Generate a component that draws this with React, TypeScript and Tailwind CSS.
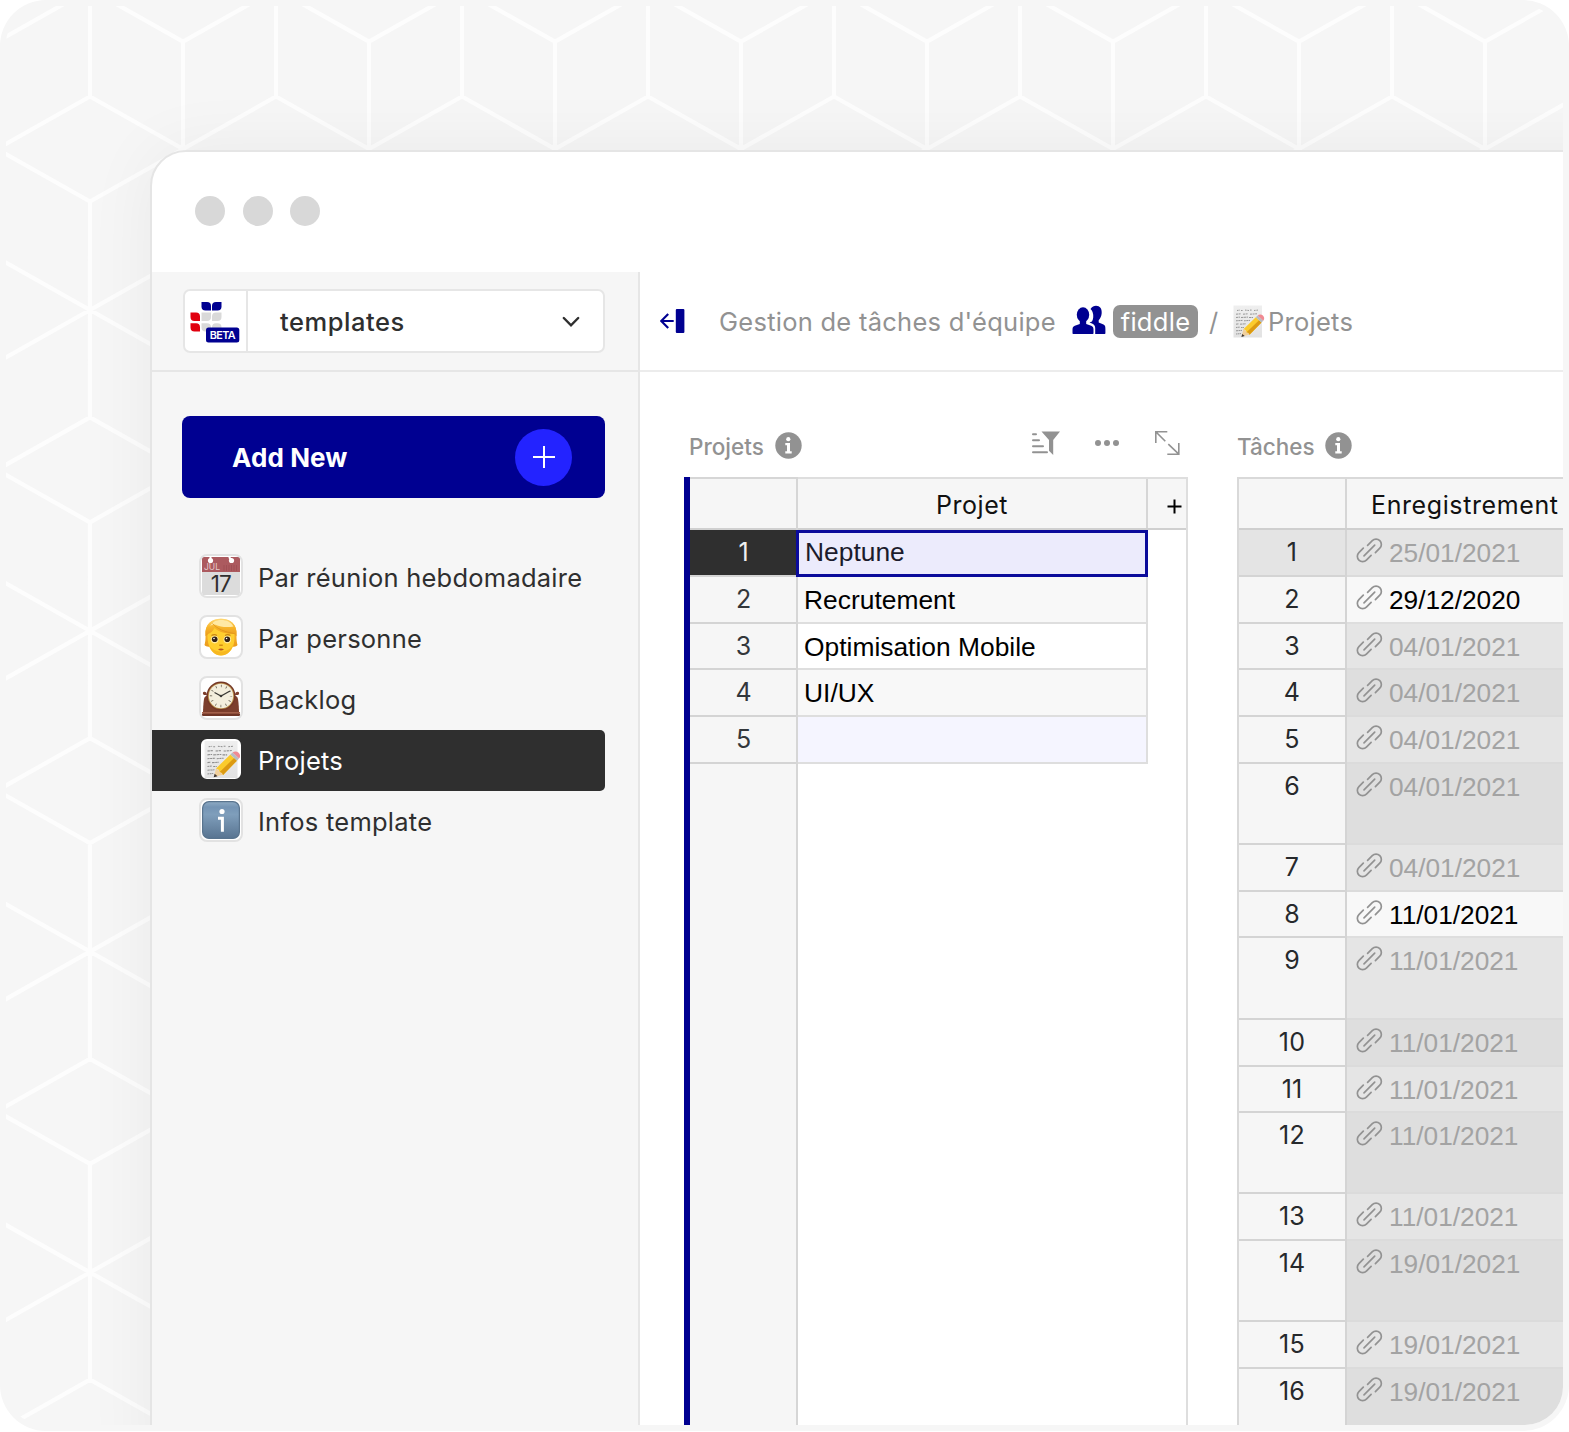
import React from 'react';

const menu = [
  { label: 'Par réunion hebdomadaire', icon: 'calendar' },
  { label: 'Par personne', icon: 'person' },
  { label: 'Backlog', icon: 'clock' },
  { label: 'Projets', icon: 'memo', active: true },
  { label: 'Infos template', icon: 'info' },
];

const projects = ['Neptune', 'Recrutement', 'Optimisation Mobile', 'UI/UX', ''];
const projectHeights = ['h-[47px]', 'h-[47px]', 'h-[46px]', 'h-[47px]', 'h-[47px]'];

const tasks = [
  { date: '25/01/2021', h: 'h-[47px]' },
  { date: '29/12/2020', h: 'h-[47px]', set: true },
  { date: '04/01/2021', h: 'h-[46px]' },
  { date: '04/01/2021', h: 'h-[47px]' },
  { date: '04/01/2021', h: 'h-[47px]' },
  { date: '04/01/2021', h: 'h-[81px]' },
  { date: '04/01/2021', h: 'h-[47px]' },
  { date: '11/01/2021', h: 'h-[46px]', set: true },
  { date: '11/01/2021', h: 'h-[82px]' },
  { date: '11/01/2021', h: 'h-[47px]' },
  { date: '11/01/2021', h: 'h-[46px]' },
  { date: '11/01/2021', h: 'h-[81px]' },
  { date: '11/01/2021', h: 'h-[47px]' },
  { date: '19/01/2021', h: 'h-[81px]' },
  { date: '19/01/2021', h: 'h-[47px]' },
  { date: '19/01/2021', h: 'h-[60px]' },
];

function CubePattern() {
  let d = '';
  for (let c = -1; c < 18; c++) {
    for (let r = -1; r < 6; r++) {
      const x = 84 + c * 93;
      const y = (c % 2 === 0 ? 304 : 143) + r * 320.8;
      d += `M${x} ${y - 109}V${y + 108}M${x - 93} ${y - 52.5}L${x + 93} ${y + 52.5}M${x - 93} ${y + 52.5}L${x + 93} ${y - 52.5}`;
    }
  }
  return (
    <svg className="absolute left-0 top-0" width="1557" height="1413" fill="none">
      <path d={d} stroke="#fdfdfd" strokeWidth="4.2" />
    </svg>
  );
}

function Memo({ className }: { className?: string }) {
  return (
    <svg viewBox="0 0 32 33" className={className}>
      <defs>
        <linearGradient id="paper" x1="0" y1="0" x2="0" y2="1">
          <stop offset="0" stopColor="#efefef" />
          <stop offset="1" stopColor="#e2e2e2" />
        </linearGradient>
      </defs>
      <rect x="0.5" y="0.5" width="28.5" height="32" fill="url(#paper)" />
      <g stroke="#777" strokeWidth="0.9" opacity=".8" fill="none">
        <path d="M4 5.5l3-.4m1 .4h2m2-.4l4 .4m1-.4h2m2 .4l4-.4" strokeDasharray="1.6 .8" />
        <path d="M3 9.200l5-.4m2 .4l5-.4m2 .4l7-.4" strokeDasharray="2 .6" />
        <path d="M3 12.500l4-.4m1 .4l7-.4m1 .4h4" strokeDasharray="2.400 .5" />
        <path d="M3 15.800l7-.4m1 .4l6-.4" strokeDasharray="1.800 .5" />
        <path d="M3 19.200l3-.4m1 .4l6-.4" strokeDasharray="2.200 .5" />
        <path d="M3 22.500l4-.4m1 .4h3" strokeDasharray="1.600 .5" />
        <path d="M3 25.800l6-.4" strokeDasharray="2 .5" />
        <path d="M3 29l5-.4" strokeDasharray="1.500 .5" />
      </g>
      <path d="M8.600 31.600l1.800-7.600 6.400 5.500z" fill="#f0cf9c" />
      <path d="M8.400 31.900l.8-3 2.500 2.100z" fill="#3b3330" />
      <path d="M10.400 24.200L22.800 12.200l5.700 5.300-12 12.300c-.8-1.900-1.600-2.400-2.900-2.500-.4-1.600-1.400-2.900-3.200-3.100z" fill="#fbcb2c" />
      <path d="M13.600 27.300L26 15.200l2.500 2.300-12 12.300c-.8-1.900-1.600-2.400-2.900-2.500z" fill="#dc9a12" />
      <path d="M22.800 12.200l1.900-1.700 5.600 5.200-1.800 1.800z" fill="#b7bcc2" />
      <path d="M24.700 10.500c1.600-1.400 3.700-1.300 5.200.1 1.400 1.400 1.900 3.500.4 5.100z" fill="#f08a92" />
    </svg>
  );
}

function Calendar() {
  return (
    <svg viewBox="0 0 38 38" className="size-[38px]">
      <rect width="38" height="38" fill="#dcdcdc" />
      <rect width="38" height="15" fill="#ac5a5f" />
      <g stroke="#a04f55" strokeWidth="1"><path d="M22 8v6m2.500-6v6m2.500-6v6m2.500-6v6m2.500-6v6m2.500-6v6" /></g>
      <circle cx="8.500" cy="3.500" r="2.600" fill="#fff" />
      <circle cx="29.500" cy="3.500" r="2.600" fill="#fff" />
      <path d="M8.500 3V0M29.500 3L27 0" stroke="#fff" strokeWidth="2" />
      <text x="2" y="13.400" fontSize="8.500" fill="#e6c9cb" fontFamily="Inter, sans-serif">JUL</text>
      <text x="18.800" y="34.500" fontSize="22.500" textAnchor="middle" fill="#2f2f2f" letterSpacing="-1" fontFamily="Inter, sans-serif">17</text>
    </svg>
  );
}

function Person() {
  return (
    <svg viewBox="0 0 38 38" className="size-[38px]">
      <defs>
        <linearGradient id="hair" x1="0" y1="0" x2="0" y2="1">
          <stop offset="0" stopColor="#ffd976" />
          <stop offset=".5" stopColor="#f7b52b" />
          <stop offset="1" stopColor="#ea9a1c" />
        </linearGradient>
      </defs>
      <path d="M3.500 17C2.500 6 10 .8 19 .8S35.500 6 34.500 17c-.1 5 .3 7 1 10-1 1.500-3 2-5 1.500H8c-2 .5-4.500 0-5.500-1.500.8-3 1.100-5 1-10z" fill="url(#hair)" />
      <path d="M5.500 17c0-5 5-8 13.500-8s13.500 3 13.500 9c.2 3-.2 6-1 9-2 6-6.500 10.500-12.500 10.500S8.500 33 6.700 27c-.9-3-1.200-7-1.200-10z" fill="#ffce2e" />
      <path d="M7 27c2 6.500 6.500 10.500 12 10.500S29.500 33.500 31 27c-2 4-7 6.500-12 6.500S9 31 7 27z" fill="#f4b01c" opacity=".75" />
      <path d="M3.500 18C2.500 6 10 .8 19 .8S35.500 6 34.500 18c-.8-.4-1.500-1.200-1.800-2.300-6 .6-14.700-1-20.200-5.700-1.500 3-3.500 5-6.500 6-.6 1-1.500 1.800-2.500 2z" fill="url(#hair)" />
      <path d="M8 8.500C10 4 14 2 19 2c5.500 0 10 2 12.500 6.500C26 9.500 19 9.500 13.500 6.800 11.500 6.200 9.500 7 8 8.500z" fill="#ffe9a4" />
      <path d="M10.500 5.500c4 5 12 8.500 22.200 10.200" stroke="#df9417" strokeWidth=".8" fill="none" />
      <path d="M9.500 17.500q2.800-1.600 5.500 0M23 17.500q2.800-1.600 5.500 0" stroke="#c98614" strokeWidth="1.200" fill="none" />
      <circle cx="12.700" cy="21.600" r="3.800" fill="#fff3c9" opacity=".7" />
      <circle cx="25.300" cy="21.600" r="3.800" fill="#fff3c9" opacity=".7" />
      <circle cx="12.700" cy="21.300" r="2.800" fill="#332216" />
      <circle cx="25.300" cy="21.300" r="2.800" fill="#332216" />
      <circle cx="12" cy="20.500" r=".8" fill="#fff" />
      <circle cx="24.600" cy="20.500" r=".8" fill="#fff" />
      <path d="M17.300 26.800q1.700 1 3.400 0" stroke="#d48f12" strokeWidth="1.400" fill="none" />
      <path d="M16 31.300q3-1.400 6 0-3 2.400-6 0z" fill="#b5531c" />
    </svg>
  );
}

function Clock() {
  return (
    <svg viewBox="0 0 38 38" className="size-[38px]">
      <path d="M0 34.500h38V37H0z" fill="#6f3526" />
      <path d="M1 35c0-6 .5-12 1-15 .4-2 2-3.500 4-3.500h26c2 0 3.600 1.500 4 3.500.5 3 1 9 1 15z" fill="#7c3e2c" />
      <path d="M2 16c-1.500-.5-1.500-3 0-3.300 1.500-.3 3 .8 3 3.300zM36 16c1.500-.5 1.500-3 0-3.300-1.500-.3-3 .8-3 3.300z" fill="#7c3e2c" />
      <path d="M0 33h38v1.500H0z" fill="#a3614b" />
      <circle cx="19" cy="17" r="14.500" fill="#743726" />
      <circle cx="19" cy="17" r="13.100" fill="#b98f4c" />
      <circle cx="19" cy="17" r="12.200" fill="#f3eedd" />
      <circle cx="19" cy="17" r="10" fill="none" stroke="#6c6658" strokeWidth="2.400" strokeDasharray=".8 4.436" strokeDashoffset=".4" />
      <path d="M12.500 13.500L19 17l9-5" stroke="#3b3a36" strokeWidth="1.300" fill="none" />
      <circle cx="19" cy="17" r="1.300" fill="#3b3a36" />
    </svg>
  );
}

function InfoTile() {
  return (
    <svg viewBox="0 0 38 38" className="size-[38px]">
      <defs>
        <linearGradient id="tile" x1="0" y1="0" x2="0" y2="1">
          <stop offset="0" stopColor="#8fabc4" />
          <stop offset=".15" stopColor="#7494b4" />
          <stop offset=".35" stopColor="#7f9ebb" />
          <stop offset="1" stopColor="#587491" />
        </linearGradient>
      </defs>
      <rect x=".6" y=".6" width="36.800" height="36.800" rx="6.500" fill="url(#tile)" stroke="#59748e" strokeWidth="1.200" />
      <circle cx="20" cy="10.500" r="2.600" fill="#fff" />
      <path d="M16 17.200h4.400v13.600" stroke="#fff" strokeWidth="3" fill="none" />
    </svg>
  );
}

function MenuIcon({ icon }: { icon: string }) {
  if (icon === 'calendar') return <Calendar />;
  if (icon === 'person') return <Person />;
  if (icon === 'clock') return <Clock />;
  if (icon === 'memo') return <Memo className="ml-[3px] h-[39px] w-[37px] shrink-0" />;
  return <InfoTile />;
}

function Logo() {
  return (
    <svg width="62" height="60" viewBox="1 0 62 60">
      <path d="M17.500 11h5.500q4 0 4 4v4.500h-5.500q-4 0-4-4z" fill="#000091" />
      <path d="M37.500 11H32q-4 0-4 4v4.500h5.500q4 0 4-4z" fill="#000091" />
      <path d="M6.500 21.500h5.500q4 0 4 4V30h-5.500q-4 0-4-4zM6.500 32.300h5.500q4 0 4 4v4.300h-5.500q-4 0-4-4z" fill="#e1000f" />
      <path d="M17.500 21.500H27V26q0 4-4 4h-5.500zM37.500 21.500H32q-4 0-4 4V30h5.500q4 0 4-4zM17.500 32.300H23q4 0 4 4v4.300h-5.500q-4 0-4-4zM37.500 40.600v-4.300q0-4-4-4H32q-4 0-4 4v4.300z" fill="#d9d9d9" />
      <rect x="22" y="36.500" width="33.300" height="15" rx="2.500" fill="#000091" />
      <text x="38.700" y="48" fontSize="10.800" fontWeight="600" textAnchor="middle" fill="#fff" fontFamily="Inter, sans-serif" textLength="26">BETA</text>
    </svg>
  );
}

function InfoBadge() {
  return (
    <svg width="27" height="27" viewBox="0 0 27 27">
      <circle cx="13.500" cy="13.500" r="13.200" fill="#929292" />
      <circle cx="13.300" cy="7.200" r="2.100" fill="#fff" />
      <path d="M10.300 11h4.700v8.200h1.700v2.300h-6.400v-2.300H12v-5.900h-1.700z" fill="#fff" />
    </svg>
  );
}

function LinkIcon() {
  return (
    <svg width="27" height="27" viewBox="0 0 27 27" fill="none" stroke="#929292" strokeWidth="1.700" strokeLinecap="round">
      <path d="M8 18.800L18.700 8.100" />
      <path d="M19.400 15.600L23.800 11.200a5.300 5.300 0 0 0-7.500-7.500L11.600 8.400" />
      <path d="M7.300 11.200L2.900 15.600a5.300 5.300 0 0 0 7.500 7.500L15.100 18.400" />
    </svg>
  );
}

function Sidebar() {
  return (
    <aside className="flex w-[488px] shrink-0 flex-col border-r-2 border-[#e6e6e6] bg-[#f6f6f6]">
      <div className="h-[100px] shrink-0 border-b-2 border-[#e6e6e6] pl-[31px] pt-[17px]">
        <div className="flex h-[64px] w-[422px] overflow-hidden rounded-[7px] border-2 border-[#e6e6e6] bg-white">
          <div className="w-[63px] shrink-0 border-r-2 border-[#e6e6e6]"><Logo /></div>
          <span className="flex-1 pl-[32px] pt-px text-[25.500px] font-medium leading-[60px] tracking-[0.550px] text-[#2f2f2f]">templates</span>
          <svg width="18" height="12" viewBox="0 0 18 12" className="mr-[23px] mt-[25px]" fill="none" stroke="#2f2f2f" strokeWidth="2.400" strokeLinecap="round">
            <path d="M1.800 2l7.200 7.400L16.200 2" />
          </svg>
        </div>
      </div>
      <button className="ml-[30px] mt-[44px] flex h-[82px] w-[423px] shrink-0 items-center justify-between rounded-[8px] bg-[#000091] pl-[50px] pr-[33px] text-[26px] font-bold tracking-[0.100px] text-white">
        <span className="pt-px">Add New</span>
        <span className="flex size-[57px] items-center justify-center rounded-full bg-[#2323ff]">
          <svg width="24" height="24" viewBox="0 0 24 24" stroke="#fff" strokeWidth="2"><path d="M1 12h22M12 1v22" /></svg>
        </span>
      </button>
      <nav className="mt-[49px]">
        {menu.map((m) => (
          <div key={m.label} className={'flex h-[61px] w-[453px] items-center pl-[47px] ' + (m.active ? 'rounded-r-[5px] bg-[#2f2f2f] text-white' : 'text-[#2f2f2f]')}>
            <div className={'mb-[3px] flex size-[44px] shrink-0 items-center justify-center overflow-hidden rounded-[8px] border-2 bg-white ' + (m.active ? 'border-[#2f2f2f]' : 'border-[#e2e2e2]')}>
              <MenuIcon icon={m.icon} />
            </div>
            <span className="ml-[15px] whitespace-nowrap pt-px text-[25.500px] leading-[60px] tracking-[0.240px]">{m.label}</span>
          </div>
        ))}
      </nav>
    </aside>
  );
}

function Breadcrumb() {
  return (
    <header className="flex h-[100px] shrink-0 items-center border-b-2 border-[#ececec] pl-[20px] text-[25.500px] leading-[32px] text-[#929292]">
      <svg width="25" height="26" viewBox="0 0 25 26" className="shrink-0">
        <path d="M9 6L2 13l7 7M2.300 13H14.500" transform="translate(-.8 0)" fill="none" stroke="#000091" strokeWidth="2.200" />
        <rect x="15.800" y="1" width="8.600" height="24" rx="1" fill="#000091" />
      </svg>
      <span className="ml-[34px] w-[353px] shrink-0 whitespace-nowrap pt-[2px] tracking-[0.260px]">Gestion de tâches d'équipe</span>
      <svg width="34" height="30" viewBox="0 0 34 30" className="mb-[2px] shrink-0" fill="#000091">
        <path d="M18.500 4C20 1.600 22 .8 24 .8c4 0 6 3 5.700 7.200-.2 3-1.300 5.500-3 7.200v2.300l4.800 2c1.600.8 1.900 2 1.900 4.500v4.300c0 .4-.3.700-.7.700H23.200v-6c0-2.500-1.200-3.800-3.200-4.600l-2.500-1 2.500-1c1.400-2.400 1.700-6 .7-9C20.300 6 19.500 4.800 18.500 4z" />
        <ellipse cx="11" cy="9.800" rx="6.200" ry="7.500" />
        <path d="M7.800 15h6.400v4l5 1.800c1.900.8 2.300 2 2.300 4v3.500c0 .4-.3.700-.7.700H1.200c-.4 0-.7-.3-.7-.7v-3.500c0-2 .4-3.200 2.300-4l5-1.800z" />
      </svg>
      <span className="ml-[7px] flex h-[33px] w-[85px] shrink-0 items-center justify-center rounded-[7px] bg-[#929292] pt-px tracking-[0.300px] text-white">fiddle</span>
      <span className="ml-[11px] w-[24px] shrink-0 pt-[2px]">/</span>
      <Memo className="h-[33px] w-[32px] shrink-0" />
      <span className="ml-[3px] pt-[2px] tracking-[0.250px]">Projets</span>
    </header>
  );
}

function ProjectsTable() {
  return (
    <section className="flex w-[504px] shrink-0 flex-col">
      <div className="flex h-[105px] shrink-0 items-end pb-[15px] pl-[5px] text-[#929292]">
        <span className="w-[86px] text-[22.500px] font-medium leading-[30px]">Projets</span>
        <span className="mb-[3px] w-[256px]"><InfoBadge /></span>
        <svg width="30" height="26" viewBox="0 0 30 26" className="mb-[6px]">
          <path d="M2 4.300h3M2 10.300h6M2 16.300h10M2 22.300h14" stroke="#929292" strokeWidth="2" strokeLinecap="round" />
          <path d="M10.500 1.500H29L22.200 10v15L18 20.800V10z" fill="#929292" />
        </svg>
        <svg width="26" height="8" viewBox="0 0 26 8" className="mb-[15px] ml-[33px]" fill="#929292">
          <circle cx="4" cy="4" r="3" /><circle cx="13" cy="4" r="3" /><circle cx="22" cy="4" r="3" />
        </svg>
        <svg width="26" height="26" viewBox="0 0 26 26" className="mb-[6px] ml-[34px]" fill="none" stroke="#929292" strokeWidth="1.600">
          <path d="M1.800 13V1.800h11.500M1.800 1.800l9.500 9.500M24.800 13v11.200H13.300M24.800 24.200L14.300 14.200" />
        </svg>
      </div>
      <div className="flex flex-1 border-l-[6px] border-[#000091]">
        <div className="flex w-[108px] shrink-0 flex-col border-r-2 border-t-2 border-[#d6d6d6] bg-[#f6f6f6]">
          <div className="h-[51px] shrink-0 border-b-2 border-[#d0d0d0]" />
          {projects.map((p, i) => (
            <div key={i} className={projectHeights[i] + ' shrink-0 border-b-2 border-[#d4d4d4] pl-px text-center text-[25px] leading-[44px] ' + (i === 0 ? 'bg-[#2f2f2f] text-[#efefef]' : 'text-[#33373b]')}>
              {i + 1}
            </div>
          ))}
        </div>
        <div className="flex flex-1 flex-col border-r-2 border-t-2 border-[#dedede]">
          <div className="flex h-[51px] shrink-0 border-b-2 border-[#d0d0d0] bg-[#f6f6f6] text-[25px] leading-[52px] text-[#111]">
            <div className="w-[350px] border-r-2 border-[#d6d6d6] text-center tracking-[0.550px]">Projet</div>
            <svg width="15" height="15" viewBox="0 0 15 15" className="ml-[19px] mt-[20px]" stroke="#000" strokeWidth="2"><path d="M.5 7.500h14M7.500 .5v14" /></svg>
          </div>
          {projects.map((p, i) => (
            <div
              key={i}
              className={
                projectHeights[i] + ' shrink-0 text-[26.400px] font-[\'Liberation_Sans\',sans-serif] ' +
                (i === 0
                  ? '-ml-[2px] w-[352px] border-[3px] border-[#0b0b9b] bg-[#ecebfc] pl-[6px] leading-[39px] text-[#1c1b2c]'
                  : 'w-[350px] border-b-2 border-r-2 border-[#dedede] pl-[6px] leading-[46px] text-black ' + (i === 4 ? 'bg-[#f5f5ff]' : i % 2 ? 'bg-[#f8f8f8]' : 'bg-white'))
              }
            >
              {p}
            </div>
          ))}
        </div>
      </div>
    </section>
  );
}

function TasksTable() {
  return (
    <section className="ml-[49px] flex w-[420px] shrink-0 flex-col">
      <div className="flex h-[105px] shrink-0 items-end pb-[15px] text-[#929292]">
        <span className="w-[88px] text-[22.500px] font-medium leading-[30px]">Tâches</span>
        <span className="mb-[3px]"><InfoBadge /></span>
      </div>
      <div className="border-l-2 border-t-2 border-[#d9d9d9]">
        <div className="flex h-[51px] border-b-2 border-[#cfcfcf] bg-[#f6f6f6] text-[25px] leading-[52px] text-[#111]">
          <div className="w-[108px] shrink-0 border-r-2 border-[#d6d6d6]" />
          <span className="ml-[24px] tracking-[0.600px]">Enregistrement</span>
        </div>
        {tasks.map((t, i) => (
          <div key={i} className={t.h + ' flex'}>
            <div className={'w-[108px] shrink-0 border-b-2 border-r-2 border-[#d4d4d4] text-center text-[25px] leading-[44px] tracking-[0.200px] text-[#26292c] ' + (i === 0 ? 'bg-[#e4e4e4]' : 'bg-[#f6f6f6]')}>
              {i + 1}
            </div>
            <div className={'flex flex-1 border-b-2 pl-[9px] ' + (t.set ? 'border-[#dedede] bg-[#f8f8f8] text-black' : i % 2 ? 'border-[#dbdbdb] bg-[#dedede] text-[#a3a3a3]' : 'border-[#dbdbdb] bg-[#e5e5e5] text-[#a3a3a3]')}>
              <span className="pt-[7px]"><LinkIcon /></span>
              <span className="ml-[6px] font-['Liberation_Sans',sans-serif] text-[26.250px] leading-[47px]">{t.date}</span>
            </div>
          </div>
        ))}
      </div>
    </section>
  );
}

export default function App() {
  return (
    <div className="h-[1432px] w-[1569px] overflow-hidden bg-white font-['Inter',sans-serif]">
      <div className="h-[1431px] rounded-[46px] bg-[#f6f6f6] p-[6px]">
        <div className="relative h-[1419px] overflow-hidden rounded-[38px] pl-[144px] pt-[144px]">
          <CubePattern />
          <div className="relative flex h-[1330px] w-[1500px] flex-col overflow-hidden rounded-tl-[36px] border-2 border-[#e5e5e5] bg-white shadow-[0_0_70px_rgba(0,0,0,0.055)]">
            <div className="flex h-[120px] shrink-0 items-start gap-[17.700px] pl-[43px] pt-[43.500px]">
              <span className="size-[30px] rounded-full bg-[#d8d8d8]" />
              <span className="size-[30px] rounded-full bg-[#d8d8d8]" />
              <span className="size-[30px] rounded-full bg-[#d8d8d8]" />
            </div>
            <div className="flex min-h-0 flex-1">
              <Sidebar />
              <main className="flex min-w-0 flex-1 flex-col">
                <Breadcrumb />
                <div className="flex flex-1 pl-[44px]">
                  <ProjectsTable />
                  <TasksTable />
                </div>
              </main>
            </div>
          </div>
        </div>
      </div>
    </div>
  );
}
